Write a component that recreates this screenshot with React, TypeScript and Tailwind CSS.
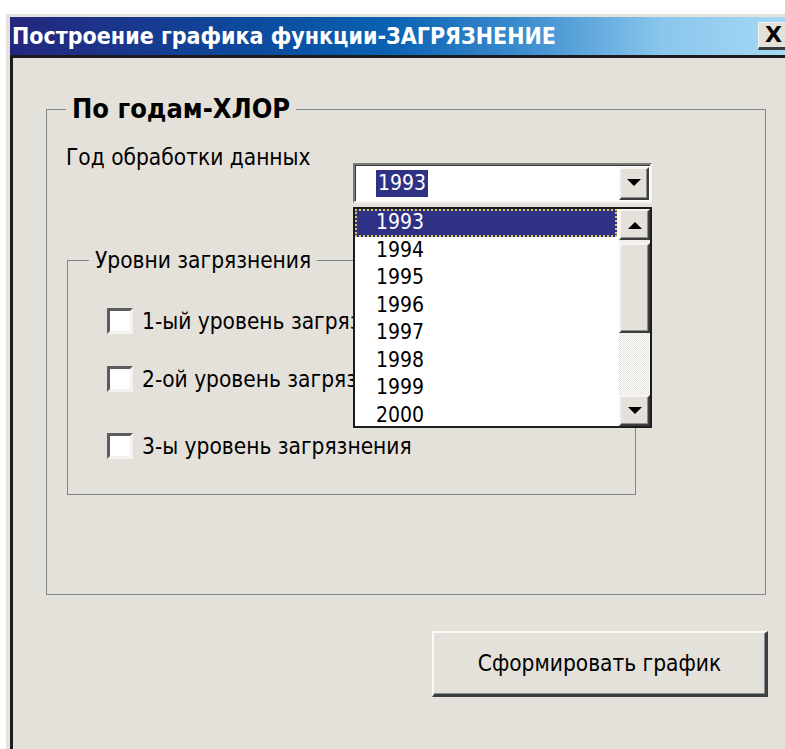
import React from "react";

const years = ["1993", "1994", "1995", "1996", "1997", "1998", "1999", "2000"];

function Tri({ dir }: { dir: "up" | "down" }) {
  return (
    <svg width="14" height="8" viewBox="0 0 14 8">
      {dir === "down" ? (
        <polygon points="0,0 14,0 7,7" fill="#000" />
      ) : (
        <polygon points="0,8 14,8 7,1" fill="#000" />
      )}
    </svg>
  );
}

function RaisedBox({ className, children }: { className?: string; children?: React.ReactNode }) {
  return (
    <div
      className={
        "flex items-center justify-center bg-[#e4e1da] border-2 border-t-[#f7f5f1] border-l-[#f7f5f1] border-b-[#3c3c3c] border-r-[#3c3c3c] shadow-[inset_-1px_-1px_0_#8c8c8c] " +
        (className ?? "")
      }
    >
      {children}
    </div>
  );
}

function CheckRow({ label, className }: { label: string; className?: string }) {
  return (
    <div className={"flex items-center gap-[9px] ml-[18px] " + (className ?? "")}>
      <span className="w-[26px] h-[26px] bg-white border-[3px] border-t-[#5c5c5c] border-l-[#5c5c5c] border-b-[#f4f2ee] border-r-[#f4f2ee]" />
      <span className="text-[22.5px] leading-[26px] whitespace-nowrap">{label}</span>
    </div>
  );
}

export default function App() {
  return (
    <div className="relative w-[785px] h-[749px] overflow-hidden bg-white font-['DejaVu_Sans_Condensed','DejaVu_Sans',sans-serif] text-black">
      <div className="ml-[6px] mt-[14px] w-[800px] h-[740px] flex flex-col border-t-[3px] border-l-[4px] border-[#e6e3dd]">
        {/* caption */}
        <div className="h-[38px] flex items-center bg-[linear-gradient(to_right,#25267e_0%,#0c4a9c_30%,#0a62b2_48%,#3f8fd0_65%,#8ac6ec_82%,#a9dcf6_100%)]">
          <span className="flex-1 pl-[2px] text-white font-bold text-[23px] leading-[38px] whitespace-nowrap">
            Построение графика функции-ЗАГРЯЗНЕНИЕ
          </span>
          <div className="mr-[16px] w-[32px] h-[28px] flex items-center justify-center bg-[#e4e1da] border-b-[3px] border-r-[2px] border-t border-l border-t-[#f5f3ef] border-l-[#f5f3ef] border-b-[#3a3a3a] border-r-[#3a3a3a] font-bold text-[22px] leading-none font-['DejaVu_Sans',sans-serif]">
            X
          </div>
        </div>

        {/* form body */}
        <div className="flex-1 flex flex-col items-start bg-[#e4e1da] border-t-[3px] border-l-[3px] border-[#1c1c1c]">
          <fieldset className="ml-[33px] mt-[37px] w-[720px] h-[500px] min-w-0 border border-[#7d8789] pl-[19px] pt-[22px]">
            <legend className="px-[6px] font-bold text-[27px] leading-[28px]">По годам-ХЛОР</legend>

            <div className="flex items-start">
              <div className="w-[287px] text-[22.5px] leading-[24px] whitespace-nowrap">Год обработки данных</div>

              {/* combo box */}
              <div className="relative mt-[18px] w-[299px] h-[40px] bg-white border-2 border-t-[#7a7a7a] border-l-[#7a7a7a] border-b-[#f7f5f1] border-r-[#f7f5f1] shadow-[inset_1px_1px_0_#3a3a3a] flex items-center">
                <div className="pl-[21px] flex-1">
                  <span className="inline-block px-[2px] bg-[#2f3185] text-white text-[21px] leading-[27px]">1993</span>
                </div>
                <RaisedBox className="w-[30px] h-[33px] mr-[1px]">
                  <Tri dir="down" />
                </RaisedBox>

                {/* open list */}
                <div className="absolute z-10 left-[-2px] top-[42px] w-[299px] h-[221px] bg-white border-2 border-[#1c1c1c] flex">
                  <div className="flex-1 overflow-hidden">
                    {years.map((y, i) => (
                      <div
                        key={y}
                        className={
                          i === 0
                            ? "h-[27.5px] mr-[2px] pl-[19px] bg-[#2f3185] text-white border-2 border-dotted border-[#d8c860] text-[21px] leading-[23.5px]"
                            : "h-[27.5px] pl-[21px] text-[21px] leading-[27.5px]"
                        }
                      >
                        {y}
                      </div>
                    ))}
                  </div>
                  <div className="w-[31px] flex flex-col">
                    <RaisedBox className="h-[31px]">
                      <Tri dir="up" />
                    </RaisedBox>
                    <div className="h-[3px] bg-[repeating-conic-gradient(#ffffff_0%_25%,#e4e1da_0%_50%)] bg-size-[2px_2px]" />
                    <RaisedBox className="h-[90px]" />
                    <div className="flex-1 bg-[repeating-conic-gradient(#ffffff_0%_25%,#e4e1da_0%_50%)] bg-size-[2px_2px]" />
                    <RaisedBox className="h-[31px]">
                      <Tri dir="down" />
                    </RaisedBox>
                  </div>
                </div>
              </div>
            </div>

            <fieldset className="mt-[45px] ml-[1px] w-[569px] h-[247px] min-w-0 border border-[#7d8789] pl-[21px]">
              <legend className="px-[6px] text-[22.5px] leading-[24px]">Уровни загрязнения</legend>
              <div className="flex flex-col">
                <CheckRow label="1-ый уровень загрязнения" className="mt-[36px]" />
                <CheckRow label="2-ой уровень загрязнения" className="mt-[32px]" />
                <CheckRow label="3-ы уровень загрязнения" className="mt-[41px]" />
              </div>
            </fieldset>
          </fieldset>

          <button className="ml-[419px] mt-[36px] w-[336px] h-[66px] bg-[#e4e1da] border-t-2 border-l-2 border-b-[3px] border-r-[3px] border-t-[#fbfaf7] border-l-[#fbfaf7] border-b-[#3a3f40] border-r-[#3a3f40] shadow-[inset_-1px_-1px_0_#8c8c8c] text-[22.5px] leading-none">
            Сформировать график
          </button>
        </div>
      </div>
    </div>
  );
}
